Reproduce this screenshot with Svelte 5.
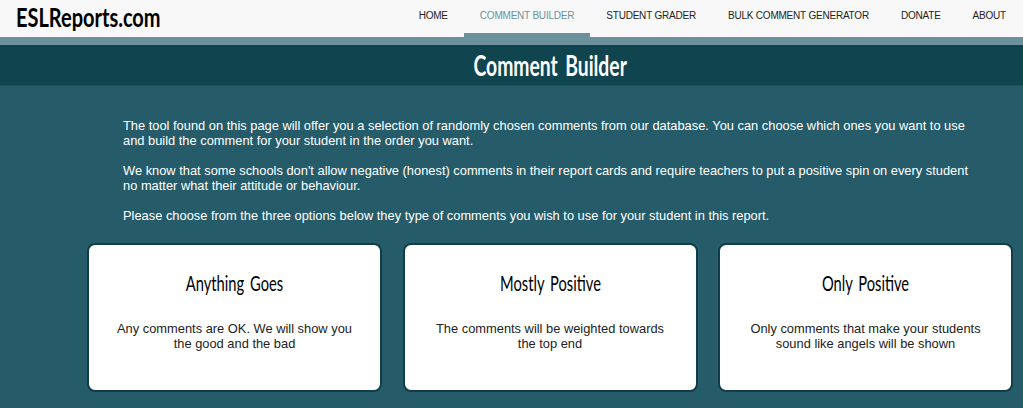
<script lang="ts">
  const navItems = [
    { label: "HOME", active: false },
    { label: "COMMENT BUILDER", active: true },
    { label: "STUDENT GRADER", active: false },
    { label: "BULK COMMENT GENERATOR", active: false },
    { label: "DONATE", active: false },
    { label: "ABOUT", active: false },
  ];

  const options = [
    {
      title: "Anything Goes",
      text: "Any comments are OK. We will show you the good and the bad",
    },
    {
      title: "Mostly Positive",
      text: "The comments will be weighted towards the top end",
    },
    {
      title: "Only Positive",
      text: "Only comments that make your students sound like angels will be shown",
    },
  ];
</script>

<header class="site-header">
  <a class="site-header__logo" href="#top">ESLReports.com</a>
  <nav class="site-nav">
    {#each navItems as item}
      <a class="site-nav__link" class:site-nav__link--active={item.active} href="#top">{item.label}</a>
    {/each}
  </nav>
</header>

<h1 class="page-title"><span class="page-title__text">Comment Builder</span></h1>

<main class="page">
  <div class="intro">
    <p>
      The tool found on this page will offer you a selection of randomly chosen comments from our database. You can
      choose which ones you want to use and build the comment for your student in the order you want.
    </p>
    <p>
      We know that some schools don't allow negative (honest) comments in their report cards and require teachers to
      put a positive spin on every student no matter what their attitude or behaviour.
    </p>
    <p>Please choose from the three options below they type of comments you wish to use for your student in this report.</p>
  </div>

  <div class="options">
    {#each options as option}
      <section class="option">
        <h2 class="option__title">{option.title}</h2>
        <p class="option__text">{option.text}</p>
      </section>
    {/each}
  </div>
</main>

<style>
  :global(body) {
    margin: 0;
    background: #265c69;
    font-family: "Liberation Sans", Arial, sans-serif;
    overflow: hidden;
  }

  .site-header {
    height: 37px;
    display: flex;
    justify-content: space-between;
    background: #f8f8f8;
    border-bottom: 8px solid #6b929c;
  }

  /* the site's brush font isn't available, so Lato is squeezed to the same proportions */
  .site-header__logo {
    display: inline-block;
    margin-left: 16px;
    color: #000;
    font-family: Lato, "Liberation Sans", sans-serif;
    font-size: 27px;
    font-weight: 700;
    line-height: 33px;
    text-decoration: none;
    transform: scaleX(0.74);
    transform-origin: left center;
  }

  .site-nav {
    display: flex;
    padding-right: 1px;
  }

  .site-nav__link {
    box-sizing: border-box;
    height: 37px;
    padding: 10px 16px 0;
    color: #222;
    font-size: 10px;
    line-height: 12px;
    letter-spacing: -0.21px;
    text-decoration: none;
  }

  .site-nav__link--active {
    color: #6b929c;
    border-bottom: 4px solid #6b929c;
  }

  .page-title {
    height: 41px;
    margin: 0;
    padding-left: 77px;
    background: #10444f;
    border-bottom: 1px solid #1b505c;
    box-sizing: border-box;
    color: #fff;
    font-family: Lato, "Liberation Sans", sans-serif;
    font-size: 28px;
    font-weight: 700;
    line-height: 41px;
    text-align: center;
  }

  .page-title__text {
    display: inline-block;
    word-spacing: 4px;
    transform: scaleX(0.69);
  }

  .intro {
    padding: 32px 40px 0 123px;
    color: #fff;
    font-size: 12.87px;
    line-height: 15px;
  }

  .intro p {
    margin: 0 0 15px;
  }

  .options {
    display: grid;
    grid-template-columns: repeat(3, 295px);
    column-gap: 20.5px;
    padding: 5px 0 0 87px;
  }

  .option {
    box-sizing: border-box;
    height: 149px;
    padding: 22px 24px 0;
    background: #fff;
    border: 2px solid #0f3d48;
    border-radius: 8px;
    text-align: center;
  }

  .option__title {
    margin: 0 0 22px;
    color: #000;
    font-family: Lato, "Liberation Sans", sans-serif;
    font-size: 21px;
    font-weight: 400;
    line-height: 32px;
    word-spacing: 3px;
    transform: scaleX(0.7);
  }

  .option__text {
    margin: 0;
    color: #222;
    font-size: 12.87px;
    line-height: 15px;
  }
</style>
